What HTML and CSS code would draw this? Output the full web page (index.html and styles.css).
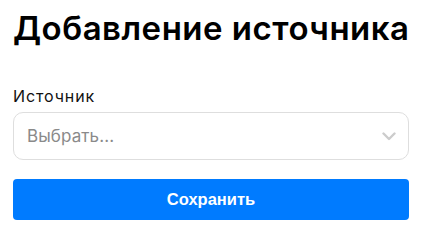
FILE: index.html
```html
<!DOCTYPE html>
<html lang="ru">
<head>
<meta charset="utf-8">
<title>Добавление источника</title>
<link rel="stylesheet" href="styles.css">
</head>
<body>
<div class="page">
  <h1 class="title">Добавление источника</h1>
  <form class="form">
    <label class="label">Источник</label>
    <div class="select">
      <span class="placeholder">Выбрать...</span>
      <svg class="chevron" width="14" height="9" viewBox="0 0 14 9" aria-hidden="true">
        <path d="M1.5 1.5 L7 7 L12.5 1.5" fill="none" stroke="#cccccc" stroke-width="2.4" stroke-linecap="round" stroke-linejoin="round"/>
      </svg>
    </div>
    <button type="button" class="btn">Сохранить</button>
  </form>
</div>
</body>
</html>
```
FILE: styles.css
```css
html, body {
  margin: 0;
  padding: 0;
  background: #ffffff;
}
.page {
  padding: 6px 14px 0 13px;
  font-family: Inter, "Open Sans", sans-serif;
  color: #000;
}
.title {
  margin: 0;
  font-size: 33px;
  font-weight: 600;
  line-height: 44px;
  letter-spacing: 0.5px;
  white-space: nowrap;
  color: #000;
}
.form {
  display: flex;
  flex-direction: column;
  margin-top: 36px;
}
.label {
  font-size: 16px;
  line-height: 20px;
  letter-spacing: 0.9px;
  color: #111;
  margin-bottom: 6px;
}
.select {
  height: 48px;
  box-sizing: border-box;
  border: 1px solid #dedede;
  border-radius: 10px;
  display: flex;
  align-items: center;
  justify-content: space-between;
  padding: 0 12px 0 13px;
}
.placeholder {
  font-size: 17px;
  color: #8a8a8a;
  letter-spacing: 0.1px;
}
.chevron {
  display: block;
}
.btn {
  margin-top: 19px;
  height: 41px;
  border: 0;
  border-radius: 4px;
  background: #007bff;
  color: #fff;
  font-family: "Liberation Sans", Arial, sans-serif;
  font-weight: 700;
  font-size: 16.5px;
  padding: 0;
}
```
